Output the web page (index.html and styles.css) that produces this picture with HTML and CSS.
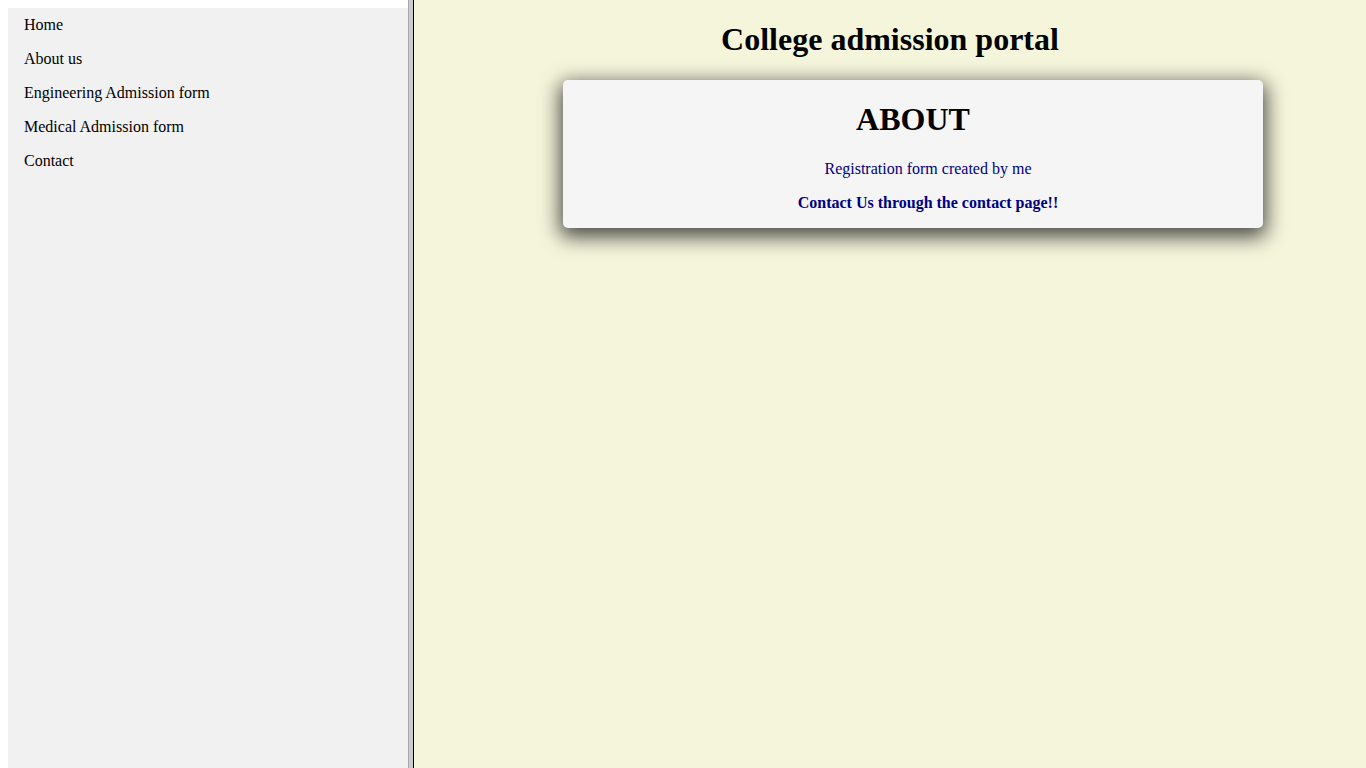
FILE: index.html
```html
<!DOCTYPE html>
<html>
<head>
<meta charset="utf-8">
<title>College admission portal</title>
<link rel="stylesheet" href="styles.css">
</head>
<body>
<div class="frameset">
  <div class="left-frame">
    <ul class="nav">
      <li><a href="#">Home</a></li>
      <li><a href="#">About us</a></li>
      <li><a href="#">Engineering Admission form</a></li>
      <li><a href="#">Medical Admission form</a></li>
      <li><a href="#">Contact</a></li>
    </ul>
  </div>
  <div class="divider"></div>
  <div class="right-frame">
    <h1 class="title">College admission portal</h1>
    <div class="card">
      <h1 class="card-title">ABOUT</h1>
      <p class="card-text">Registration form created by me</p>
      <p class="card-text card-strong">Contact Us through the contact page!!</p>
    </div>
  </div>
</div>
</body>
</html>
```
FILE: styles.css
```css
html, body {
  margin: 0;
  padding: 0;
  height: 100%;
  overflow: hidden;
}
body {
  font-family: "Liberation Serif", "Times New Roman", serif;
  font-size: 16px;
}
.frameset {
  display: flex;
  height: 768px;
}
.left-frame {
  width: 400px;
  padding: 8px 0 0 8px;
  background: #ffffff;
  overflow: hidden;
}
.nav {
  list-style: none;
  margin: 0;
  padding: 0;
  width: 400px;
  height: 100%;
  background: #f1f1f1;
}
.nav a {
  display: block;
  color: #000;
  padding: 8px 16px;
  text-decoration: none;
}
.divider {
  width: 4px;
  flex: none;
  background: #cccccc;
  border-left: 1px solid #a9a9a9;
  border-right: 1px solid #000;
}
.right-frame {
  flex: 1;
  background: #f5f5dc;
  padding: 0 8px;
  display: flow-root;
}
.title {
  text-align: center;
  font-size: 32px;
  margin: 21.44px 0;
}
.card {
  display: flow-root;
  width: 700px;
  margin-left: 141px;
  background: #f5f5f5;
  border-radius: 5px;
  box-shadow: 0 6px 20px 3px rgba(0, 0, 0, 0.7);
  text-align: center;
}
.card-title {
  font-size: 32px;
  margin: 21.44px 0;
}
.card-text {
  color: #000080;
  margin: 16px 0;
  padding-left: 30px;
}
.card-strong {
  font-weight: bold;
}
```
